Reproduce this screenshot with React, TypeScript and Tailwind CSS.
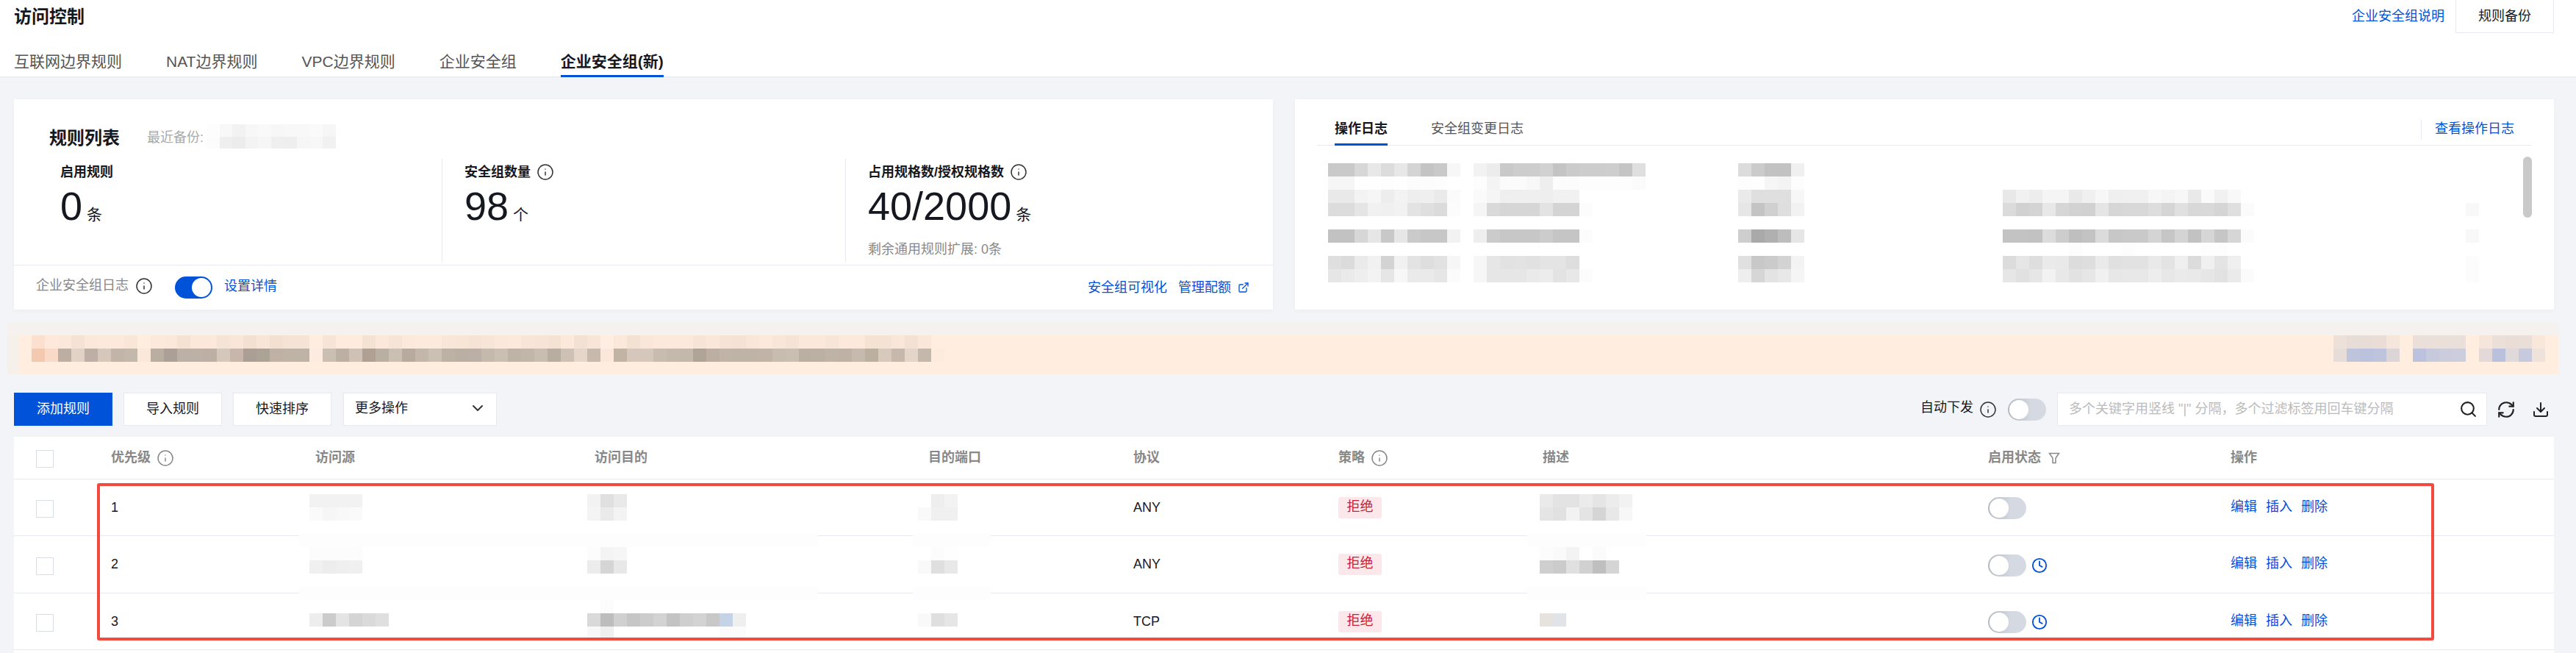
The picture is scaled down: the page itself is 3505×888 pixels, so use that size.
import React from 'react';
import { ChevronDown, Clock, Download, ExternalLink, Info, RefreshCw, Search } from 'lucide-react';

// masked content of the screenshot: each token is one mosaic cell
// "__" = empty, 2 digits = gray level, 6 digits = full hex colour
const toColor = (t: string) => {
  if (t === '__') return 'transparent';
  return t.length === 2 ? `#${t}${t}${t}` : `#${t}`;
};

const Mosaic: React.FC<{ rows: string[]; cellW?: number; cellH?: number }> = ({ rows, cellW = 18, cellH = 18 }) => (
  <div className="flex flex-col shrink-0">
    {rows.map((row, i) => (
      <div key={i} className="flex" style={{ height: cellH }}>
        {row.split(' ').filter(Boolean).map((t, j) => (
          <div key={j} className="shrink-0 h-full" style={{ width: cellW, backgroundColor: toColor(t) }} />
        ))}
      </div>
    ))}
  </div>
);

const Toggle: React.FC<{ on?: boolean; className?: string }> = ({ on, className }) =>
  on ? (
    <div className={`w-[51px] h-[30px] rounded-full bg-[#0052d9] flex items-center justify-end pr-[2px] shrink-0 ${className ?? ''}`}>
      <div className="w-[26px] h-[26px] rounded-full bg-white" />
    </div>
  ) : (
    <div className={`w-[52px] h-[30px] rounded-full bg-gradient-to-r from-[#b4b8c1] to-[#d5d9e2] to-60% flex items-center pl-[2px] shrink-0 ${className ?? ''}`}>
      <div className="w-[26px] h-[26px] rounded-full bg-white" />
    </div>
  );

const Checkbox: React.FC<{ className?: string }> = ({ className }) => (
  <div className={`w-[24px] h-[24px] bg-white border border-[#d9dde8] ${className ?? ''}`} />
);

const FilterIcon = () => (
  <svg viewBox="0 0 16 16" className="w-[16px] h-[16px] ml-[10px]" fill="none" stroke="#888888" strokeWidth="1.5">
    <path d="M1.5 1.5h13L10 8v6.5H6V8z" />
  </svg>
);

const Stat: React.FC<{ label: string; value: string; unit: string; info?: boolean; extra?: string; className: string }> = ({
  label,
  value,
  unit,
  info,
  extra,
  className,
}) => (
  <div className={`h-[141px] pt-[6px] ${className}`}>
    <div className="flex items-center h-[24px] text-[18px] font-bold text-[#16181f]">
      {label}
      {info && <Info size={24} strokeWidth={1.5} className="ml-[8px] text-[#333333]" />}
    </div>
    <div className="flex items-baseline mt-[7px] h-[54px]">
      <span className="text-[54px] leading-[54px] text-[#16181f]">{value}</span>
      <span className="text-[21px] ml-[6px] text-[#16181f]">{unit}</span>
    </div>
    {extra && <div className="mt-[20px] text-[18px] leading-[24px] text-[#888888]">{extra}</div>}
  </div>
);

const logColumns: string[][] = [
  [
    'c9 c9 d7 e8 dc e7 d4 c4 c9 f7',
    'f6 f6 fe fe fd fe fc fc fd ff',
    'e9 e9 f3 f6 ed f3 ee ef ea fb',
    'dc dc e5 f1 f0 f2 e3 df db fc',
    '',
    'c2 c2 d7 e6 c8 e6 ca c7 c7 f2',
    '',
    'df db ea f1 d3 f1 e3 de e2 f6',
    'e6 ea ee f3 e6 f7 ea ea e6 fb',
  ],
  [
    'f2 ec c9 cd cd d1 c4 cb cd cd ce c5 df',
    'fd f4 fb fb f8 ee fc fc fd fd fd fd fb',
    'fa f5 ef ef ef ee f1 f1',
    'f5 d9 d6 d6 d6 e3 d4 d4 fc',
    '',
    'ee cb c7 c7 c7 cc c5 c5 fc',
    '',
    'f6 e6 e2 e3 e1 e4 e4 de',
    'f6 e6 e6 e6 ea ec e3 e8 fc',
  ],
  [
    'dc cb c2 c2 f0',
    'fd fe f6 f3 fd',
    'ea df df df f7',
    'e6 c4 d0 de f2',
    '',
    'ce a9 b0 bd e6',
    '',
    'e0 c8 cb d3 f3',
    'ee d6 e3 e8 f5',
  ],
  [
    '',
    '',
    'e8 f1 ed f5 f5 e9 f0 f7 ef f0 f0 f7 f4 f7 e9 fa f1 f8',
    'db d1 d4 e8 d6 d2 d1 e5 d6 d8 d8 dd d5 e0 d8 d9 d5 df fb',
    '',
    'c3 c3 c2 dc cd bf c3 db c7 c9 c9 d4 c6 d4 c2 d6 c6 d6 fb',
    '__ __ __ __ __ fc __ __ __ fd __ __ __ __ __ fd fd',
    'dc e6 de ea e9 dc de ea e0 e2 e2 e9 e3 ef dc f0 e4 ef',
    'e6 e1 e6 f2 e8 e2 e6 f0 e7 e8 e8 ed e7 ea e9 e6 e2 ea fb',
  ],
  ['', '', '', 'f8', '', 'f8', '', 'fc', 'fc'],
];

const bannerLeft = [
  'fbe0cf fee8d9 fce8da f5e2d5 fce8da fce9db fce9db fae6d7 ffeee0 fce9db fbe8da f5e2d3 fbe8da fbe8da f5e3d5 f9e6d8 f3e0d1 f8e5d8 f3e0d1 f5e3d5 f5e3d5 ffede0 f6e5d7 feebdd feebdd f4e2d3 fbe8da f6e4d7 fce9db fcebdd fcebdc f8e7d8 f7e5d6 f6e3d5 f7e5d7 fbe8da fce9db f8e5d7 f7e4d6 f4e2d3 fde9db f3e1d3 f8e5d7 ffeee1 fbe8da f3e1d2 fae7d9 fce9db fce9db fce9db f6e4d6 f9e7d9 f6e3d5 f4e2d3 f9e6d8 fde9db f8e6d8 f5e3d5 fbe8da fbe8da f7e5d7 fce9db fce9db f4e2d3 f4e2d4 f9e6d8 f3e1d3 fae7d9',
  'f3c9b0 f9d9c7 bcaea2 e1d2c5 bdafa5 d5c8bb c2b4a8 c4b7ab fae8da baada1 aca096 bdb1a5 bdb0a6 bdafa3 d4c7bc c8b6ab ab9f95 aca397 bfb1a6 bfb3a6 bfb2a6 fcebde cbbeb2 bcafa3 cfc1b5 b0a094 b9afa2 cbbeb2 b8aa9f c3b6aa ccc0b4 bdb0a5 bbaea2 bcafa5 c5b8ad cbbfb3 bfb2a6 c2b5a9 c9bcb0 b9aca1 cdc0b4 e5d6c9 c7baad fbe8da c1b4a5 d5c7bb d5c7bb c8bbaf c5b8ad c4b7ab b0a398 bcafa2 c0b3a7 bfb2a6 bfb2a6 c1b4a7 c8bbaf cabdb2 bbaea2 bcb0a5 bfb2a6 bfb2a5 c6b9ae bbaf9f d7c9bb c7b8ae e3d6c9 c4b7ab fdebde',
];

const bannerRight = [
  ['ede0d8 e8dcd6 e8dcd6 eaddd5 f5e6dc', 'e6dcd8 bfc4dd bbc2dd bfc4dd dcd5d8'],
  ['ebe0d9 ebe0d9 ebe0d9 ebe0d9', 'bdc2dc c7cadc cbcddc cccedd'],
  ['f5e5db ecdfd7 e9ddd6 eadfd8 f8e8dc', 'e2d9d8 b9c1dd e0d9d9 c7cadc eee2da'],
];

const gridCols = 'grid grid-cols-[132px_278px_380px_454px_279px_279px_278px_606px_330px_440px]';

const rules = [
  {
    id: 1,
    proto: 'ANY',
    height: 'h-[77px]',
    top: 'mt-[20px]',
    destTop: 'mt-[20px]',
    band: '',
    clock: false,
    source: ['f2 f2 f2 f2', 'fa f6 f8 fa'],
    dest: ['f2 e0 e9', 'f4 ea f3'],
    port: ['__ ee f3', 'f9 f0 f0'],
    desc: ['ea e3 e3 eb e5 ec f2', 'e5 e1 f2 e4 d5 e8 f7'],
  },
  {
    id: 2,
    proto: 'ANY',
    height: 'h-[78px]',
    top: 'mt-[15px]',
    destTop: 'mt-[15px]',
    band: 'top-[-3px]',
    clock: true,
    source: ['fc fc fc fc', 'f0 ed ef f0'],
    dest: ['fc f4 f6', 'ec d5 e8'],
    port: ['__ fc fe', 'f9 df e8'],
    desc: ['fc fa f3 __ fb', 'cf cb e0 d1 bf d5'],
  },
  {
    id: 3,
    proto: 'TCP',
    height: 'h-[77px]',
    top: 'mt-[27px]',
    destTop: 'mt-[9px]',
    band: 'top-[-9px]',
    clock: true,
    source: ['ed cb e4 d4 da df'],
    dest: ['__ fc', 'd9 bd d0 c6 cc d3 c3 cf d3 c8 c5d3e6 ef', 'f8 ef __ __ __ __ __ __ __ __ fb fb'],
    port: ['f9 df e6'],
    desc: ['e6e3de e0e4e8'],
  },
];

const headers = [
  { label: '优先级', info: true },
  { label: '访问源' },
  { label: '访问目的' },
  { label: '目的端口' },
  { label: '协议' },
  { label: '策略', info: true },
  { label: '描述' },
];

export default function App() {
  return (
    <div className="w-[3505px] h-[888px] overflow-hidden flex flex-col bg-[#f2f4f8] text-[18px] text-[#16181f] font-['Liberation_Sans','Noto_Sans_CJK_SC',sans-serif]">
      {/* Page header */}
      <div className="bg-white border-b border-[#e6e9ef] shrink-0">
        <div className="flex items-start justify-between h-[45px] pl-[19px] pr-[30px]">
          <h1 className="text-[24px] leading-[45px] font-bold">访问控制</h1>
          <div className="flex items-center">
            <a className="text-[#0052d9] mr-[15px] leading-[43px]" href="#">企业安全组说明</a>
            <button className="w-[134px] h-[45px] border border-[#e6e9ef] border-t-0 bg-white text-[18px]">规则备份</button>
          </div>
        </div>
        <div className="flex gap-[60px] h-[59px] pl-[19px] text-[21px] leading-[21px] text-[#555555]">
          <div className="pt-[28px]">互联网边界规则</div>
          <div className="pt-[28px]">NAT边界规则</div>
          <div className="pt-[28px]">VPC边界规则</div>
          <div className="pt-[28px]">企业安全组</div>
          <div className="pt-[28px] h-[60px] box-border border-b-[3px] border-[#0052d9] font-bold text-[#16181f]">企业安全组(新)</div>
        </div>
      </div>

      {/* Summary cards */}
      <div className="flex gap-[30px] mt-[30px] mx-[19px] w-[3456px] h-[286px] shrink-0">
        <div className="w-[1713px] bg-white flex flex-col shadow-[0_2px_6px_rgba(0,0,0,0.03)]">
          <div className="flex items-center h-[33px] mt-[34px] pl-[48px]">
            <span className="text-[24px] font-bold mt-[5px]">规则列表</span>
            <span className="ml-[37px] text-[#aaaaaa] mt-[3px] w-[81px]">最近备份:</span>
            <Mosaic cellW={17.6} cellH={16.5} rows={['fd f8 f2 f7 f9 f7 f8 f8 fa f6', 'fc ef ec f3 f6 ef ee f6 f7 f1']} />
          </div>
          <div className="flex mt-[14px]">
            <Stat label="启用规则" value="0" unit="条" className="w-[582px] pl-[63px]" />
            <Stat label="安全组数量" value="98" unit="个" info className="w-[549px] pl-[30px] border-l border-[#e9ebf0]" />
            <Stat
              label="占用规格数/授权规格数"
              value="40/2000"
              unit="条"
              info
              extra="剩余通用规则扩展: 0条"
              className="flex-1 pl-[30px] border-l border-[#e9ebf0]"
            />
          </div>
          <div className="flex items-center justify-between flex-1 mt-[3px] border-t border-[#e6e9ef] pl-[30px] pr-[32px]">
            <div className="flex items-center">
              <span className="text-[#888888] -mt-[5px]">企业安全组日志</span>
              <Info size={24} strokeWidth={1.5} className="ml-[9px] text-[#333333] -mt-[5px]" />
              <Toggle on className="ml-[30px]" />
              <a className="ml-[16px] text-[#0052d9] -mt-[4px]" href="#">设置详情</a>
            </div>
            <div className="flex items-center text-[#0052d9]">
              <a href="#">安全组可视化</a>
              <a className="ml-[15px]" href="#">管理配额</a>
              <ExternalLink size={16} strokeWidth={2} className="ml-[9px]" />
            </div>
          </div>
        </div>

        <div className="w-[1713px] bg-white pl-[30px] pr-[31px] shadow-[0_2px_6px_rgba(0,0,0,0.03)]">
          <div className="flex items-start justify-between h-[35px] mt-[28px] border-b border-[#e6e9ef]">
            <div className="flex pl-[24px] gap-[59px]">
              <div className="h-[35px] box-border border-b-[3px] border-[#0052d9] font-bold leading-[24px]">操作日志</div>
              <div className="leading-[24px] text-[#555555]">安全组变更日志</div>
            </div>
            <a className="h-[27px] mr-[23px] pl-[18px] border-l border-[#e6e9ef] text-[#0052d9] leading-[24px]" href="#">查看操作日志</a>
          </div>
          <div className="relative pl-[15px] pt-[24px]">
            <div className="grid grid-cols-[198px_360px_360px_630px_18px]">
              {logColumns.map((rows, i) => (
                <Mosaic key={i} rows={rows} />
              ))}
            </div>
            <div className="absolute right-[-1px] top-[15px] w-[12px] h-[83px] rounded-full bg-[#c9c9c9]" />
          </div>
        </div>
      </div>

      {/* Notice banner */}
      <div className="mt-[17px] ml-[10px] w-[3471px] shrink-0">
        <div className="h-[18px] bg-[#f5f1ee]" />
        <div className="flex h-[53px]">
          <div className="w-[15px] bg-[#f6f0eb]" />
          <div className="flex-1 flex justify-between bg-[#ffede0] pl-[18px] pr-[18px]">
            <Mosaic rows={bannerLeft} />
            <div className="flex gap-[18px]">
              {bannerRight.map((rows, i) => (
                <Mosaic key={i} rows={rows} />
              ))}
            </div>
          </div>
        </div>
      </div>

      {/* Toolbar */}
      <div className="flex items-center justify-between h-[45px] mt-[25px] pl-[19px] pr-[36px] shrink-0">
        <div className="flex gap-[15px]">
          <button className="w-[134px] h-[45px] bg-[#0052d9] text-white">添加规则</button>
          <button className="w-[134px] h-[45px] bg-white border border-[#e6e9ef]">导入规则</button>
          <button className="w-[134px] h-[45px] bg-white border border-[#e6e9ef]">快速排序</button>
          <button className="w-[209px] h-[45px] ml-[1px] pb-[3px] bg-white border border-[#e6e9ef] flex items-center justify-between pl-[15px] pr-[13px]">
            更多操作
            <ChevronDown size={24} strokeWidth={2} className="text-[#333333]" />
          </button>
        </div>
        <div className="flex items-center">
          <span className="-mt-[4px]">自动下发</span>
          <Info size={24} strokeWidth={1.5} className="ml-[8px] text-[#333333]" />
          <Toggle className="ml-[15px]" />
          <div className="flex items-center w-[585px] h-[45px] ml-[15px] pl-[15px] pr-[12px] bg-white border border-[#e6e9ef]">
            <input
              className="flex-1 min-w-0 bg-transparent outline-none text-[18px] placeholder:text-[#bbbbbb]"
              placeholder={'多个关键字用竖线 "|" 分隔，多个过滤标签用回车键分隔'}
            />
            <Search size={25} strokeWidth={2} className="text-[#222222]" />
          </div>
          <RefreshCw size={26} strokeWidth={2} className="ml-[13px] text-[#222222]" />
          <Download size={24} strokeWidth={2} className="ml-[22px] text-[#222222]" />
        </div>
      </div>

      {/* Rule table */}
      <div className="relative flex-1 mt-[15px] ml-[19px] w-[3456px] bg-white">
        <div className={`${gridCols} items-center h-[58px] border-b border-[#e6e9ef] font-bold text-[#888888]`}>
          <div className="pl-[30px]">
            <Checkbox className="mt-[3px]" />
          </div>
          {headers.map((h) => (
            <div key={h.label} className="flex items-center">
              {h.label}
              {h.info && <Info size={24} strokeWidth={1.5} className="ml-[8px]" />}
            </div>
          ))}
          <div className="flex items-center">
            启用状态
            <FilterIcon />
          </div>
          <div>操作</div>
        </div>

        {rules.map((r) => (
          <div key={r.id} className={`relative ${gridCols} items-center ${r.height} border-b border-[#e6e9ef]`}>
            {r.band && (
              <>
                <div className={`absolute ${r.band} left-[388px] w-[706px] h-[18px] bg-[#fdfdfd]`} />
                <div className={`absolute ${r.band} left-[1223px] w-[106px] h-[18px] bg-[#fdfdfd]`} />
                <div className={`absolute ${r.band} left-[2059px] w-[162px] h-[18px] bg-[#fdfdfd]`} />
              </>
            )}
            <div className="pl-[30px]">
              <Checkbox className="mt-[4px]" />
            </div>
            <div>{r.id}</div>
            <div className={`self-start ${r.top} -ml-[8px]`}>
              <Mosaic rows={r.source} />
            </div>
            <div className={`self-start ${r.destTop} -ml-[10px]`}>
              <Mosaic rows={r.dest} />
            </div>
            <div className={`self-start ${r.top} -ml-[14px]`}>
              <Mosaic rows={r.port} />
            </div>
            <div>{r.proto}</div>
            <div>
              <span className="inline-block w-[59px] h-[29px] rounded-[3px] bg-[#fce8ea] text-center leading-[27px] text-[#c0233c]">拒绝</span>
            </div>
            <div className={`self-start ${r.top} -ml-[4px]`}>
              <Mosaic rows={r.desc} />
            </div>
            <div className="flex items-center mt-[2px]">
              <Toggle />
              {r.clock && <Clock size={22} strokeWidth={2} className="ml-[7px] text-[#0052d9]" />}
            </div>
            <div className="flex gap-[12px] text-[#0052d9] -mt-[2px]">
              <a href="#">编辑</a>
              <a href="#">插入</a>
              <a href="#">删除</a>
            </div>
          </div>
        ))}

        {/* Red annotation box drawn over the rows */}
        <div className="absolute left-[113px] top-[63px] w-[3180px] h-[214px] border-[4px] border-[#f24a3f] rounded-[3px]" />
      </div>
    </div>
  );
}
